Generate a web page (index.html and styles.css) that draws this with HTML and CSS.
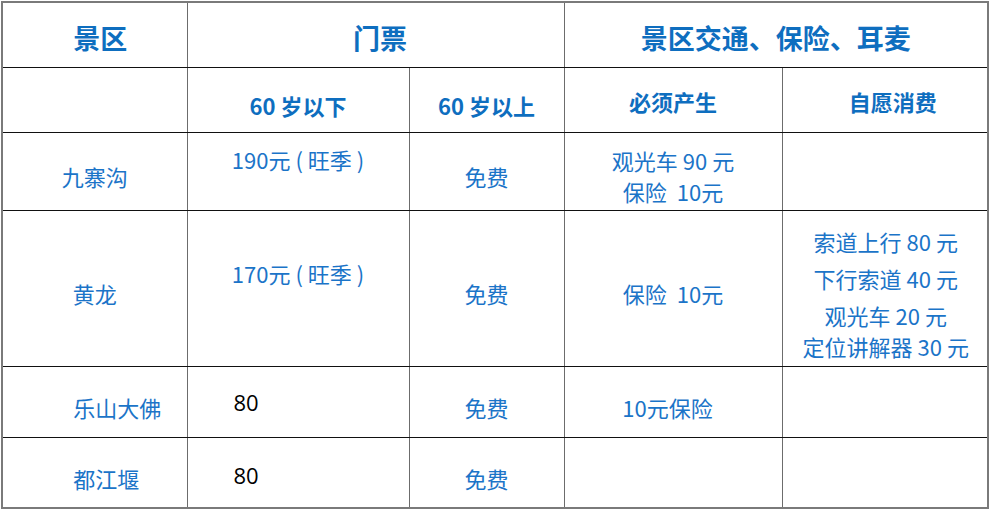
FILE: index.html
```html
<!DOCTYPE html>
<html lang="zh">
<head>
<meta charset="utf-8">
<title>景区门票</title>
<link rel="stylesheet" href="styles.css">
</head>
<body>
<div class="wrap">
<table class="fees">
  <colgroup>
    <col class="c1"><col class="c2"><col class="c3"><col class="c4"><col class="c5">
  </colgroup>
  <tr class="r-head">
    <th class="h1 shift-sm">景区</th>
    <th class="h1 shift-ticket" colspan="2">门票</th>
    <th class="h1" colspan="2">景区交通、保险、耳麦</th>
  </tr>
  <tr class="r-sub">
    <th></th>
    <th class="h2 low">60 岁以下</th>
    <th class="h2 low">60 岁以上</th>
    <th class="h2">必须产生</th>
    <th class="h2 shift-md">自愿消费</th>
  </tr>
  <tr class="r-jzg">
    <td class="mid">九寨沟</td>
    <td class="top">190元 ( 旺季 )</td>
    <td class="mid">免费</td>
    <td class="top lines"><div>观光车 90 元</div><div>保险&nbsp;&nbsp;10元</div></td>
    <td></td>
  </tr>
  <tr class="r-hl">
    <td class="mid">黄龙</td>
    <td class="top">170元 ( 旺季 )</td>
    <td class="mid">免费</td>
    <td class="mid">保险&nbsp;&nbsp;10元</td>
    <td class="top list">
      <div class="l1">索道上行 80 元</div>
      <div class="l2">下行索道 40 元</div>
      <div class="l3">观光车 20 元</div>
      <div class="l4">定位讲解器 30 元</div>
    </td>
  </tr>
  <tr class="r-ls">
    <td class="shift-lg">乐山大佛</td>
    <td class="num">80</td>
    <td>免费</td>
    <td class="shift-left">10元保险</td>
    <td></td>
  </tr>
  <tr class="r-djy">
    <td class="shift-md2">都江堰</td>
    <td class="num">80</td>
    <td>免费</td>
    <td></td>
    <td></td>
  </tr>
</table>
</div>
</body>
</html>
```

FILE: styles.css
```css
html, body {
  margin: 0;
  padding: 0;
  background: #ffffff;
}

.wrap {
  padding: 1px 0 0 1px;
}

.fees {
  border-collapse: collapse;
  table-layout: fixed;
  width: 986px;
  border: 2px solid #7a7a7a;
  font-family: "Noto Sans CJK SC", "Noto Sans", sans-serif;
  color: #1b74c8;
  font-size: 22px;
  line-height: 26px;
}

.c1 { width: 185px; }
.c2 { width: 222px; }
.c3 { width: 155px; }
.c4 { width: 218px; }
.c5 { width: 206px; }

.fees th,
.fees td {
  border-top: 1px solid #111111;
  border-bottom: 1px solid #111111;
  border-left: 1px solid #6c6c6c;
  border-right: 1px solid #6c6c6c;
  padding: 0;
  text-align: center;
  vertical-align: top;
  white-space: nowrap;
}

.fees th {
  color: #0e6ebf;
  font-weight: 700;
}

.r-head { height: 65px; }
.r-sub { height: 65px; }
.r-jzg { height: 78px; }
.r-hl { height: 156px; }
.r-ls { height: 71px; }
.r-djy { height: 71px; }

.h1 {
  font-size: 27px;
  line-height: 30px;
  padding-top: 20px !important;
}

.h2 {
  font-size: 22px;
  line-height: 26px;
  padding-top: 20px !important;
}

.h2.low { padding-top: 24px !important; }

.shift-sm { padding-left: 11px !important; }
.shift-ticket { padding-left: 9px !important; }
.shift-md { padding-left: 16px !important; }

.r-jzg td.mid { padding-top: 30px; }
.r-jzg td.top { padding-top: 13px; }
.r-jzg td.lines { padding-top: 12px; line-height: 31px; }

.r-hl td.mid { padding-top: 69px; }
.r-hl td.top { padding-top: 49px; }
.r-hl td.list { padding-top: 17px; padding-left: 2px; }
.list div { line-height: 26px; }
.list .l2 { margin-top: 11px; }
.list .l3 { margin-top: 11px; }
.list .l4 { margin-top: 5px; }

.r-ls td { padding-top: 27px; }
.r-djy td { padding-top: 27px; }

.r-ls td.num,
.r-djy td.num {
  text-align: left;
  color: #000000;
  font-family: "Open Sans", "Noto Sans", sans-serif;
  font-size: 22px;
  padding-left: 46px;
  padding-top: 22px;
}

.r-djy td.num { padding-top: 24px; }

.shift-lg { padding-left: 45px !important; }
.shift-md2 { padding-left: 23px !important; }
.shift-left { padding-right: 11px !important; }
```
